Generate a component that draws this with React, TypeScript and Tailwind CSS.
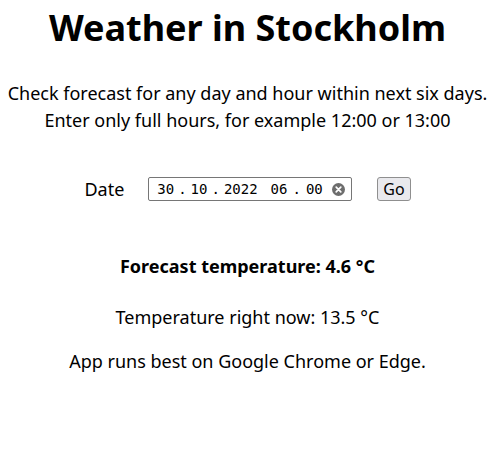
import React from 'react';

function ClearIcon() {
  return (
    <svg width="13" height="13" viewBox="0 0 13 13" className="shrink-0">
      <circle cx="6.5" cy="6.5" r="6.5" fill="#6d6d6d" />
      <path d="M4.2 4.2 L8.8 8.8 M8.8 4.2 L4.2 8.8" stroke="#fff" strokeWidth="1.7" strokeLinecap="round" />
    </svg>
  );
}

function DateField() {
  const mono = { fontFamily: '"DejaVu Sans Mono", "Liberation Mono", monospace' };
  return (
    <div className="flex items-center h-[24px] w-[204px] border border-[#767676] rounded-[2px] bg-white pl-[8px] pr-[6px]">
      <div className="flex items-center text-[14px] leading-none text-black" style={mono}>
        <span>30</span>
        <span className="mx-[4px]">.</span>
        <span>10</span>
        <span className="mx-[4px]">.</span>
        <span>2022</span>
        <span className="ml-[13px]">06</span>
        <span className="mx-[5px]">.</span>
        <span>00</span>
      </div>
      <div className="ml-auto flex items-center">
        <ClearIcon />
      </div>
    </div>
  );
}

export default function App() {
  return (
    <div
      className="flex flex-col items-center text-center text-black bg-white min-h-[463px]"
      style={{ fontFamily: '"Noto Sans", "Open Sans", sans-serif' }}
    >
      <h1 className="mt-[4px] text-[36px] leading-[48px] font-bold whitespace-nowrap">Weather in Stockholm</h1>

      <p className="mt-[28px] text-[18px] leading-[27px] whitespace-nowrap">
        Check forecast for any day and hour within next six days.
        <br />
        Enter only full hours, for example 12:00 or 13:00
      </p>

      <div className="mt-[43px] flex items-center">
        <label className="text-[18px] leading-[24px] mr-[24px]">Date</label>
        <DateField />
        <button className="ml-[25px] h-[24px] px-[5px] border border-[#8f8f8f] rounded-[3px] bg-[#e9e9ed] text-[16px] leading-none">
          Go
        </button>
      </div>

      <p className="mt-[53px] text-[18px] leading-[24px] font-bold">Forecast temperature: 4.6 °C</p>

      <p className="mt-[27px] text-[18px] leading-[24px]">Temperature right now: 13.5 °C</p>

      <p className="mt-[20px] text-[18px] leading-[24px]">App runs best on Google Chrome or Edge.</p>
    </div>
  );
}
